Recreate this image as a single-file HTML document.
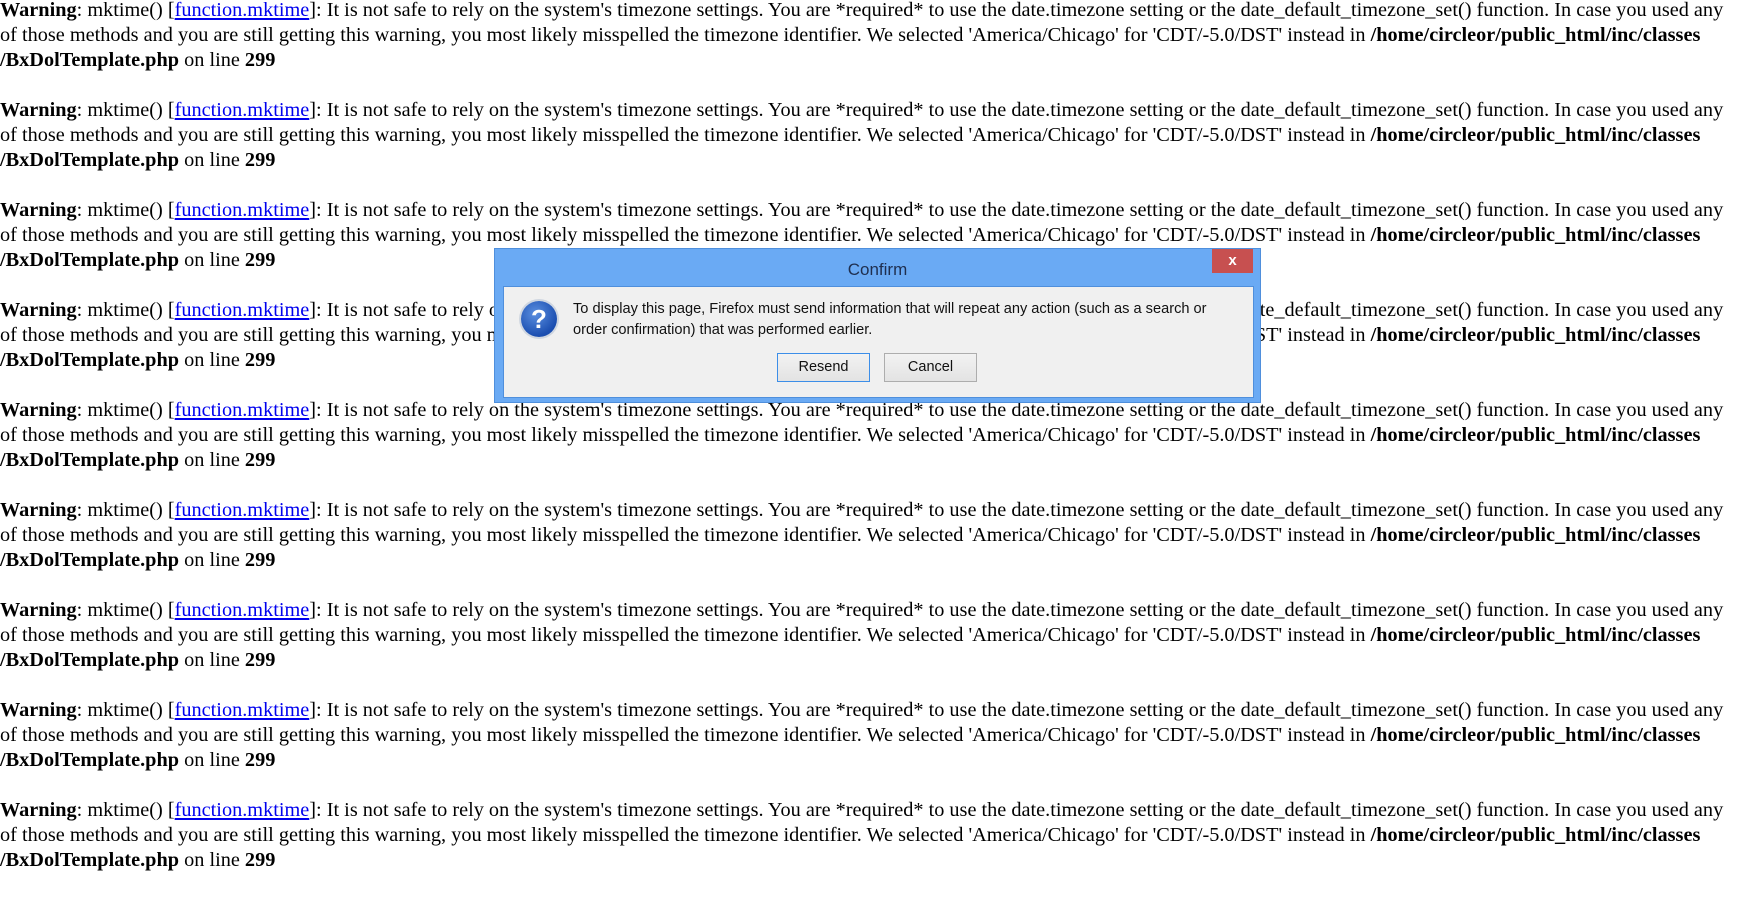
<!DOCTYPE html>
<html><head><meta charset="utf-8"><style>
html,body{margin:0;padding:0;background:#fff;width:1742px;height:811px;overflow:hidden}
body{font-family:"Liberation Serif",serif;font-size:20.3px;line-height:25px;color:#000}
.wrap{position:absolute;left:0;top:-2px}
.w{margin:0 0 25px 0;white-space:nowrap}
a{color:#00e;text-decoration:underline}
.dlg{position:absolute;left:494px;top:248px;width:767px;height:155px;background:#6aaaf4;border:1px solid #4f8fdc;box-sizing:border-box;font-family:"Liberation Sans",sans-serif}
.title{position:absolute;left:0;right:0;top:8px;text-align:center;font-size:17px;color:#1f2f4f}
.close{position:absolute;left:717px;top:0;width:41px;height:24px;background:#c75050;color:#fff;font-size:15px;font-weight:bold;text-align:center;line-height:23px}
.inner{position:absolute;left:8px;top:37px;width:751px;height:112px;background:#f0f0f0;border:1px solid #4f8fdc;box-sizing:border-box}
.msg{position:absolute;left:69px;top:12px;font-size:14.6px;line-height:21px;color:#111;white-space:nowrap}
.icon{position:absolute;left:17px;top:14px;width:36px;height:36px;border-radius:50%;background:radial-gradient(circle at 40% 35%,#5b8fe0,#1b4eb0 70%);box-shadow:0 0 0 2px #cfd6e0;color:#fff;font-weight:bold;font-size:26px;text-align:center;line-height:36px}
.btn{position:absolute;top:66px;height:29px;box-sizing:border-box;border:1px solid #adadad;background:linear-gradient(#f2f2f2,#e3e3e3);font-size:14.5px;text-align:center;line-height:27px;color:#111}
</style></head><body>
<div class="wrap">
<div class="w"><b>Warning</b>: mktime() [<a>function.mktime</a>]: It is not safe to rely on the system's timezone settings. You are *required* to use the date.timezone setting or the date_default_timezone_set() function. In case you used any<br>of those methods and you are still getting this warning, you most likely misspelled the timezone identifier. We selected 'America/Chicago' for 'CDT/-5.0/DST' instead in <b>/home/circleor/public_html/inc/classes</b><br><b>/BxDolTemplate.php</b> on line <b>299</b></div>
<div class="w"><b>Warning</b>: mktime() [<a>function.mktime</a>]: It is not safe to rely on the system's timezone settings. You are *required* to use the date.timezone setting or the date_default_timezone_set() function. In case you used any<br>of those methods and you are still getting this warning, you most likely misspelled the timezone identifier. We selected 'America/Chicago' for 'CDT/-5.0/DST' instead in <b>/home/circleor/public_html/inc/classes</b><br><b>/BxDolTemplate.php</b> on line <b>299</b></div>
<div class="w"><b>Warning</b>: mktime() [<a>function.mktime</a>]: It is not safe to rely on the system's timezone settings. You are *required* to use the date.timezone setting or the date_default_timezone_set() function. In case you used any<br>of those methods and you are still getting this warning, you most likely misspelled the timezone identifier. We selected 'America/Chicago' for 'CDT/-5.0/DST' instead in <b>/home/circleor/public_html/inc/classes</b><br><b>/BxDolTemplate.php</b> on line <b>299</b></div>
<div class="w"><b>Warning</b>: mktime() [<a>function.mktime</a>]: It is not safe to rely on the system's timezone settings. You are *required* to use the date.timezone setting or the date_default_timezone_set() function. In case you used any<br>of those methods and you are still getting this warning, you most likely misspelled the timezone identifier. We selected 'America/Chicago' for 'CDT/-5.0/DST' instead in <b>/home/circleor/public_html/inc/classes</b><br><b>/BxDolTemplate.php</b> on line <b>299</b></div>
<div class="w"><b>Warning</b>: mktime() [<a>function.mktime</a>]: It is not safe to rely on the system's timezone settings. You are *required* to use the date.timezone setting or the date_default_timezone_set() function. In case you used any<br>of those methods and you are still getting this warning, you most likely misspelled the timezone identifier. We selected 'America/Chicago' for 'CDT/-5.0/DST' instead in <b>/home/circleor/public_html/inc/classes</b><br><b>/BxDolTemplate.php</b> on line <b>299</b></div>
<div class="w"><b>Warning</b>: mktime() [<a>function.mktime</a>]: It is not safe to rely on the system's timezone settings. You are *required* to use the date.timezone setting or the date_default_timezone_set() function. In case you used any<br>of those methods and you are still getting this warning, you most likely misspelled the timezone identifier. We selected 'America/Chicago' for 'CDT/-5.0/DST' instead in <b>/home/circleor/public_html/inc/classes</b><br><b>/BxDolTemplate.php</b> on line <b>299</b></div>
<div class="w"><b>Warning</b>: mktime() [<a>function.mktime</a>]: It is not safe to rely on the system's timezone settings. You are *required* to use the date.timezone setting or the date_default_timezone_set() function. In case you used any<br>of those methods and you are still getting this warning, you most likely misspelled the timezone identifier. We selected 'America/Chicago' for 'CDT/-5.0/DST' instead in <b>/home/circleor/public_html/inc/classes</b><br><b>/BxDolTemplate.php</b> on line <b>299</b></div>
<div class="w"><b>Warning</b>: mktime() [<a>function.mktime</a>]: It is not safe to rely on the system's timezone settings. You are *required* to use the date.timezone setting or the date_default_timezone_set() function. In case you used any<br>of those methods and you are still getting this warning, you most likely misspelled the timezone identifier. We selected 'America/Chicago' for 'CDT/-5.0/DST' instead in <b>/home/circleor/public_html/inc/classes</b><br><b>/BxDolTemplate.php</b> on line <b>299</b></div>
<div class="w"><b>Warning</b>: mktime() [<a>function.mktime</a>]: It is not safe to rely on the system's timezone settings. You are *required* to use the date.timezone setting or the date_default_timezone_set() function. In case you used any<br>of those methods and you are still getting this warning, you most likely misspelled the timezone identifier. We selected 'America/Chicago' for 'CDT/-5.0/DST' instead in <b>/home/circleor/public_html/inc/classes</b><br><b>/BxDolTemplate.php</b> on line <b>299</b></div>
</div>
<div class="dlg">
  <div class="title">Confirm</div>
  <div class="close">x</div>
  <div class="inner">
    <div class="icon">?</div>
    <div class="msg">To display this page, Firefox must send information that will repeat any action (such as a search or<br>order confirmation) that was performed earlier.</div>
    <div class="btn" style="left:273px;width:93px;border-color:#3c8ee8">Resend</div>
    <div class="btn" style="left:380px;width:93px">Cancel</div>
  </div>
</div>
</body></html>
